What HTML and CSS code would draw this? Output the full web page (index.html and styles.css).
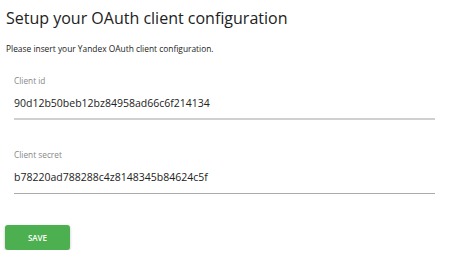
FILE: index.html
```html
<!DOCTYPE html>
<html>
<head>
<meta charset="utf-8">
<link rel="stylesheet" href="styles.css">
</head>
<body>
<div class="page">
  <h1 class="title">Setup your OAuth client configuration</h1>
  <p class="intro">Please insert your Yandex OAuth client configuration.</p>
  <div class="form">
    <div class="field">
      <label class="label">Client id</label>
      <div class="value focused">90d12b50beb12bz84958ad66c6f214134</div>
    </div>
    <div class="field">
      <label class="label">Client secret</label>
      <div class="value">b78220ad788288c4z8148345b84624c5f</div>
    </div>
  </div>
  <button class="save">SAVE</button>
</div>
</body>
</html>
```

FILE: styles.css
```css
html, body {
  margin: 0;
  padding: 0;
  background: #ffffff;
}
body {
  font-family: "Open Sans", "Noto Sans", sans-serif;
  color: #212121;
}
.page {
  padding: 5px 5px 0 6px;
  display: flex;
  flex-direction: column;
  align-items: flex-start;
}
.title {
  margin: 0;
  font-size: 16px;
  font-weight: 400;
  line-height: 26px;
  color: #222;
}
.intro {
  margin: 12px 0 0 0;
  font-size: 8.4px;
  line-height: 12px;
  color: #222;
}
.form {
  align-self: stretch;
  padding: 0 10px 0 8px;
  display: flex;
  flex-direction: column;
  gap: 29px;
  margin-top: 20px;
}
.field {
  display: flex;
  flex-direction: column;
}
.label {
  font-size: 8.3px;
  line-height: 12px;
  color: #888888;
}
.value {
  margin-top: 9px;
  font-size: 10.5px;
  line-height: 14px;
  padding-bottom: 9px;
  color: #222;
  border-bottom: 1px solid #aaaaaa;
}
.value.focused {
  border-bottom: 2px solid #d0d0d0;
  padding-bottom: 8px;
}
.save {
  margin: 31px 0 0 -1px;
  width: 65px;
  height: 25px;
  border: none;
  border-radius: 3px;
  background: #4caf50;
  color: #fff;
  font-family: "Open Sans", "Noto Sans", sans-serif;
  font-size: 8px;
  font-weight: 600;
  box-shadow: 0 1px 3px rgba(0,0,0,0.25);
  padding: 0;
}
```
